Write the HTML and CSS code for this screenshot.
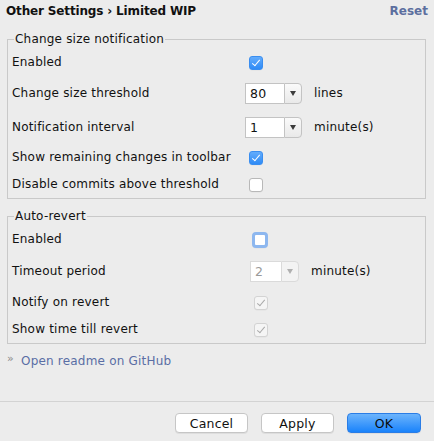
FILE: index.html
```html
<!DOCTYPE html>
<html lang="en">
<head>
<meta charset="utf-8">
<title>Limited WIP</title>
<link rel="stylesheet" href="styles.css">
</head>
<body>
<div class="dialog">
  <header class="titlebar">
    <h1 class="crumbs">Other Settings › Limited WIP</h1>
    <a class="reset">Reset</a>
  </header>

  <fieldset class="group group-size">
    <legend>Change size notification</legend>
    <div class="row row-check">
      <span class="label">Enabled</span>
      <span class="cb cb-on"></span>
    </div>
    <div class="row row-combo">
      <span class="label">Change size threshold</span>
      <span class="combo"><span class="combo-field">80</span><span class="combo-btn"><i class="arrow"></i></span></span>
      <span class="unit">lines</span>
    </div>
    <div class="row row-combo">
      <span class="label">Notification interval</span>
      <span class="combo"><span class="combo-field">1</span><span class="combo-btn"><i class="arrow"></i></span></span>
      <span class="unit">minute(s)</span>
    </div>
    <div class="row row-check">
      <span class="label">Show remaining changes in toolbar</span>
      <span class="cb cb-on"></span>
    </div>
    <div class="row row-check">
      <span class="label">Disable commits above threshold</span>
      <span class="cb"></span>
    </div>
  </fieldset>

  <fieldset class="group group-revert">
    <legend>Auto-revert</legend>
    <div class="row row-check">
      <span class="label">Enabled</span>
      <span class="cb cb-focus"></span>
    </div>
    <div class="row row-combo">
      <span class="label">Timeout period</span>
      <span class="combo combo-off"><span class="combo-field">2</span><span class="combo-btn"><i class="arrow"></i></span></span>
      <span class="unit">minute(s)</span>
    </div>
    <div class="row row-check">
      <span class="label">Notify on revert</span>
      <span class="cb cb-off"></span>
    </div>
    <div class="row row-check">
      <span class="label">Show time till revert</span>
      <span class="cb cb-off"></span>
    </div>
  </fieldset>

  <div class="link-row">
    <span class="chev">»</span>
    <a class="link">Open readme on GitHub</a>
  </div>

  <div class="spacer"></div>

  <footer class="buttons">
    <button class="btn">Cancel</button>
    <button class="btn">Apply</button>
    <button class="btn btn-default">OK</button>
  </footer>
</div>
</body>
</html>
```
FILE: styles.css
```css
* { box-sizing: border-box; }

html, body {
  margin: 0;
  padding: 0;
  background: #ececec;
}

body {
  font-family: "DejaVu Sans", "Liberation Sans", sans-serif;
  font-size: 12px;
  letter-spacing: 0.2px;
  color: #111;
  line-height: 15px;
}

.dialog {
  display: flex;
  flex-direction: column;
  min-height: 100vh;
}

.titlebar {
  display: flex;
  justify-content: space-between;
  align-items: center;
  padding: 4px 6px 0 6px;
  height: 19px;
}

.crumbs {
  margin: 0;
  font-size: 12px;
  font-weight: bold;
  letter-spacing: -0.15px;
  line-height: 15px;
  color: #111;
}

.reset {
  font-weight: bold;
  color: #5c6f9f;
  letter-spacing: 0;
}

.group {
  margin: 12px 8px 0 7px;
  padding: 2px 0 0 4px;
  border: 1px solid #c9c9c9;
  min-width: 0;
}

.group-revert { margin-top: 9px; }

.group legend {
  margin-left: 2px;
  padding: 0 1px;
  line-height: 16px;
  color: #111;
}

.row {
  display: grid;
  grid-template-columns: 233px auto auto;
  justify-content: start;
  align-items: center;
}

.group-revert .row { grid-template-columns: 238px auto auto; }

.row-check { height: 27px; }
.row-combo { height: 34px; }
.group-revert .row-combo { height: 36px; }

/* checkboxes */
.cb {
  display: block;
  width: 14px;
  height: 14px;
  margin-left: 4px;
  border: 1px solid #b8b8b8;
  border-radius: 3px;
  background: #fff;
  position: relative;
  box-shadow: 0 0.5px 0 rgba(0,0,0,0.05);
}

.cb-on {
  border-color: #3a8ef0;
  background: linear-gradient(#63acfc, #2f8bf6);
}

.cb-on::after,
.cb-off::after {
  content: "";
  position: absolute;
  left: 4px;
  top: 1.5px;
  width: 3px;
  height: 7px;
  border: solid #fff;
  border-width: 0 1.6px 1.6px 0;
  transform: rotate(40deg);
}

.cb-off {
  border-color: #d3d3d3;
  background: #f5f5f5;
}

.cb-off::after { border-color: #a9a9a9; border-width: 0 1.3px 1.3px 0; }

.cb-focus {
  width: 16px;
  height: 16px;
  margin-left: 2px;
  border: 3px solid #8db7ef;
  border-radius: 4px;
}

/* combo boxes */
.combo {
  display: flex;
  height: 21px;
  width: 57px;
}

.group-revert .combo { width: 49px; }

.combo-field {
  flex: 1;
  background: #fff;
  border: 1px solid #c3c3c3;
  border-right: none;
  padding-left: 4px;
  line-height: 19px;
  font-size: 12.5px;
  color: #111;
}

.combo-btn {
  width: 18px;
  border: 1px solid #c3c3c3;
  border-radius: 0 4px 4px 0;
  background: linear-gradient(#fafafa, #e9e9e9);
  display: flex;
  align-items: center;
  justify-content: center;
}

.arrow {
  width: 0;
  height: 0;
  border-left: 3.5px solid transparent;
  border-right: 3.5px solid transparent;
  border-top: 5px solid #3c3c3c;
  margin-top: 1px;
}

.combo-off .combo-field { color: #9a9a9a; border-color: #dadada; }
.combo-off .combo-btn { border-color: #dadada; background: #f3f3f3; }
.combo-off .arrow { border-top-color: #b0b0b0; }

.unit { margin-left: 12px; }

/* link */
.link-row {
  display: flex;
  align-items: center;
  margin-top: 9px;
  padding-left: 7px;
  line-height: 16px;
}

.chev {
  font-size: 11px;
  color: #8a8a8a;
  width: 14px;
  margin-top: -4px;
}

.link {
  color: #5a6ea5;
  font-size: 12px;
}

.spacer { flex: 1; }

/* footer buttons */
.buttons {
  height: 40px;
  border-top: 1px solid #d3d3d3;
  display: flex;
  justify-content: flex-end;
  align-items: flex-start;
  gap: 13px;
  padding: 11px 13px 0 0;
}

.btn {
  font-family: inherit;
  font-size: 12.5px;
  letter-spacing: 0.2px;
  width: 73px;
  height: 20px;
  padding: 0;
  border: 1px solid #c6c6c6;
  border-radius: 4px;
  background: #fff;
  color: #111;
  box-shadow: 0 1px 0 rgba(0,0,0,0.06);
}

.btn-default {
  width: 74px;
  border-color: #2a7de6;
  background: linear-gradient(#6cb4fc, #1a83fb);
  color: #0a0a0a;
}
```
